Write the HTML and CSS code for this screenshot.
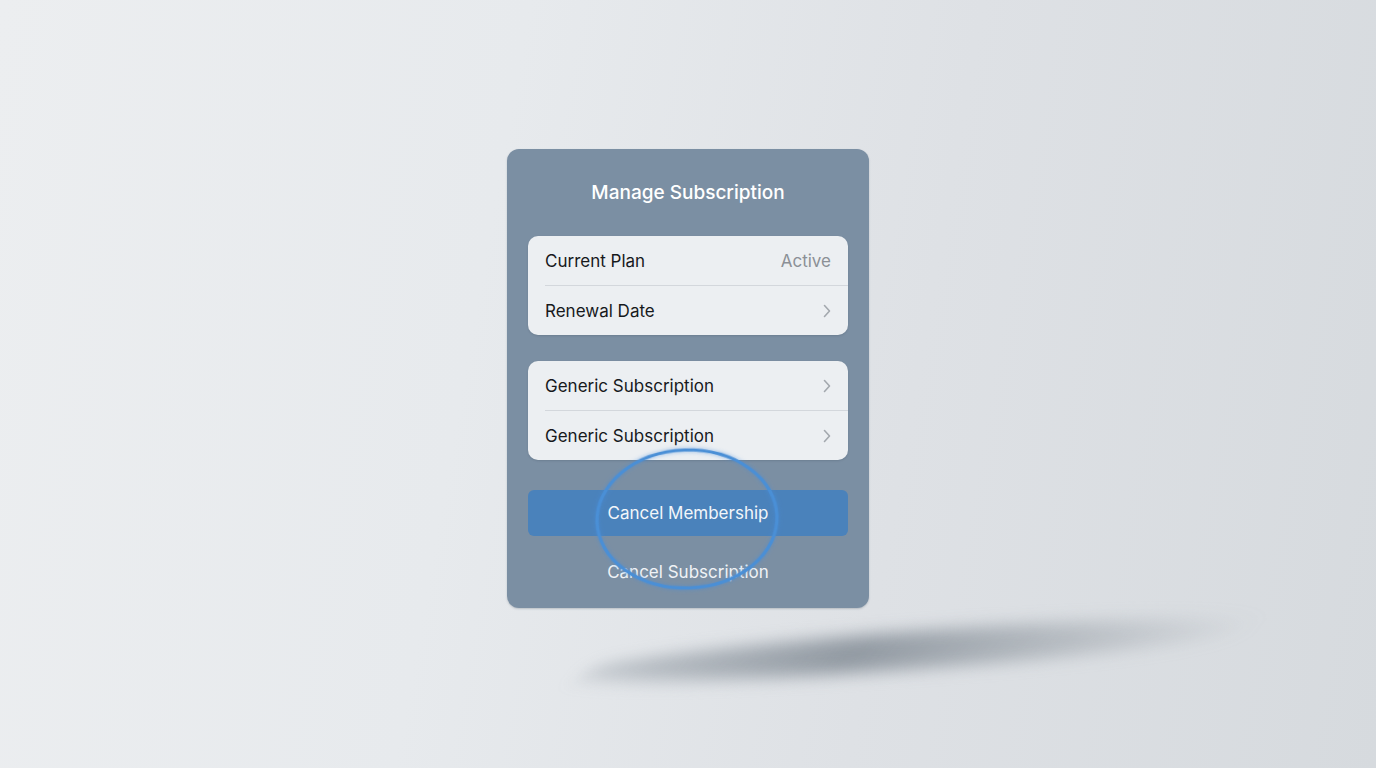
FILE: index.html
```html
<!DOCTYPE html>
<html lang="en">
<head>
    <meta charset="UTF-8">
    <meta name="viewport" content="width=device-width, initial-scale=1.0">
    <title>Manage Subscription</title>
    <link rel="stylesheet" href="styles.css">
</head>
<body>
    <div class="floor-shadow"></div>
    <div class="sheet">
        <h1>Manage Subscription</h1>

        <div class="group">
            <div class="row">
                <span>Current Plan</span>
                <span class="value">Active</span>
            </div>
            <div class="row">
                <span>Renewal Date</span>
                <svg class="chevron" viewBox="0 0 8 14"><path d="M1.5 1.5 L6.5 7 L1.5 12.5"/></svg>
            </div>
        </div>

        <div class="group">
            <div class="row">
                <span>Generic Subscription</span>
                <svg class="chevron" viewBox="0 0 8 14"><path d="M1.5 1.5 L6.5 7 L1.5 12.5"/></svg>
            </div>
            <div class="row">
                <span>Generic Subscription</span>
                <svg class="chevron" viewBox="0 0 8 14"><path d="M1.5 1.5 L6.5 7 L1.5 12.5"/></svg>
            </div>
        </div>

        <div class="actions">
            <button class="primary-btn">Cancel Membership</button>
            <a href="#" class="text-link">Cancel Subscription</a>
            <!-- circled highlight over the cancel actions -->
            <svg class="highlight" viewBox="0 0 190 146">
                <ellipse cx="95" cy="73" rx="90" ry="69"/>
            </svg>
        </div>
    </div>
</body>
</html>
```

FILE: styles.css
```css
* {
    margin: 0;
    padding: 0;
    box-sizing: border-box;
    font-family: Inter, 'Noto Sans', sans-serif;
}

body {
    height: 100vh;
    display: flex;
    align-items: flex-start;
    justify-content: center;
    padding-top: 149px;
    background: linear-gradient(100deg, #eceef0 0%, #e7eaed 35%, #dee1e5 65%, #d6dade 100%);
    position: relative;
    overflow: hidden;
}

.floor-shadow {
    position: absolute;
    left: 600px;
    top: 630px;
    width: 640px;
    height: 40px;
    background: linear-gradient(90deg, rgba(130,140,150,0.35), rgba(120,130,140,0.75) 40%, rgba(140,148,156,0.45) 72%, rgba(170,176,182,0) 100%);
    border-radius: 50%;
    transform: skewX(-40deg) rotate(-4deg);
    filter: blur(9px);
}

.sheet {
    position: relative;
    width: 362px;
    height: 459px;
    padding: 30px 21px 0;
    background: #7b8fa3;
    border-radius: 12px;
    box-shadow: 0 1px 2px rgba(60,75,90,0.25);
}

h1 {
    color: #fff;
    text-align: center;
    font-size: 19px;
    font-weight: 500;
    line-height: 28px;
    margin-bottom: 29px;
}

.group {
    background: #eceff2;
    border-radius: 10px;
    margin-bottom: 26px;
    padding-left: 17px;
    box-shadow: 0 1px 2px rgba(50,65,80,0.2);
}

.group + .group {
    margin-bottom: 30px;
}

.row {
    height: 50px;
    display: flex;
    align-items: center;
    justify-content: space-between;
    padding-right: 17px;
    font-size: 17px;
    color: #17191c;
    border-bottom: 1px solid #d3d7dc;
}

.row:last-child {
    border-bottom: none;
    height: 49px;
}

.value {
    color: #8b9096;
}

.chevron {
    width: 8px;
    height: 14px;
}

.chevron path {
    fill: none;
    stroke: #a3a8ae;
    stroke-width: 1.6;
    stroke-linecap: round;
    stroke-linejoin: round;
}

.actions {
    position: relative;
    display: flex;
    flex-direction: column;
    align-items: center;
}

.primary-btn {
    width: 100%;
    height: 46px;
    background: #4a82bb;
    border: none;
    border-radius: 6px;
    color: #f2f6fa;
    font-size: 17px;
    cursor: pointer;
}

.text-link {
    margin-top: 26px;
    color: #f0f3f6;
    font-size: 17px;
    text-decoration: none;
}

.highlight {
    position: absolute;
    left: 64px;
    top: -44px;
    width: 190px;
    height: 146px;
    transform: rotate(-2deg);
    overflow: visible;
}

.highlight ellipse {
    fill: none;
    stroke: #4a8fd6;
    stroke-width: 3.2;
    filter: drop-shadow(0 0 2px rgba(70,140,220,0.6));
}
```
